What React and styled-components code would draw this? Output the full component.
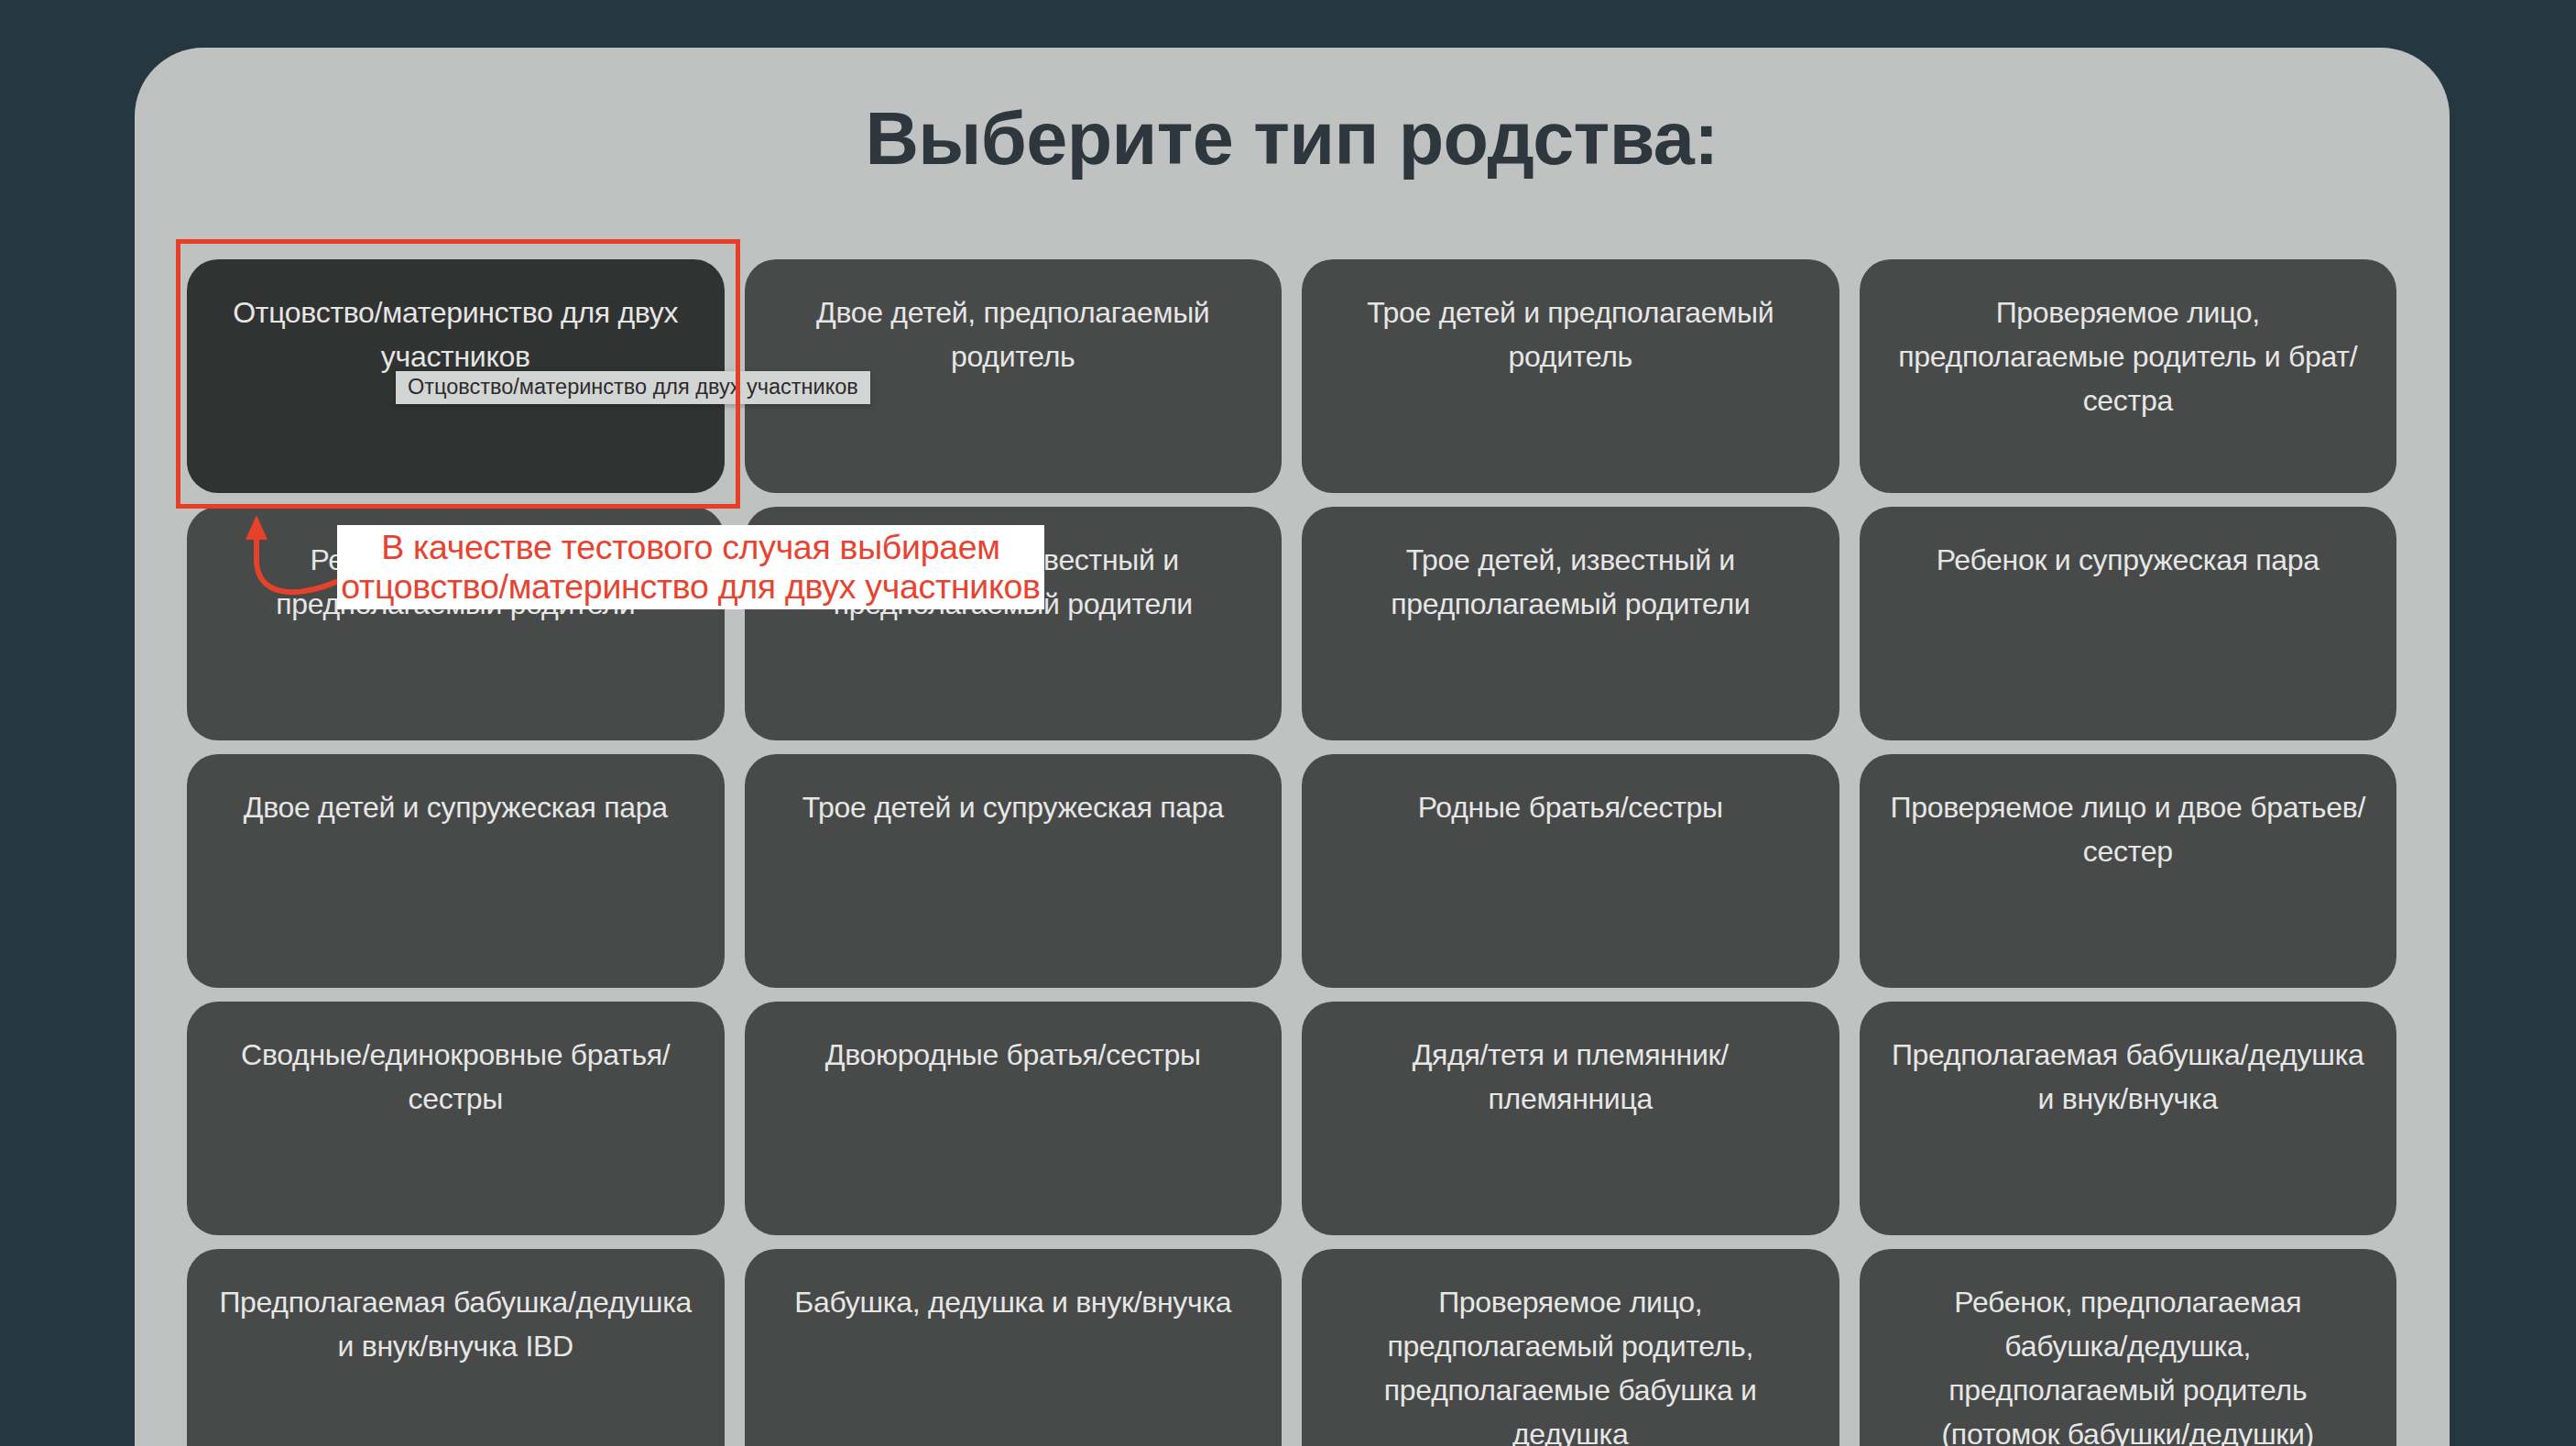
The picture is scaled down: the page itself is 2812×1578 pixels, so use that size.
import React from 'react';
import styled, { createGlobalStyle } from 'styled-components';

const GlobalStyle = createGlobalStyle`
  html, body {
    margin: 0;
    padding: 0;
    height: 100%;
    overflow: hidden;
    background: #253740;
  }
  body {
    font-family: "Liberation Sans", Arial, sans-serif;
  }
`;

const relations = [
  { lines: ['Отцовство/материнство для двух', 'участников'], active: true },
  { lines: ['Двое детей, предполагаемый', 'родитель'] },
  { lines: ['Трое детей и предполагаемый', 'родитель'] },
  { lines: ['Проверяемое лицо,', 'предполагаемые родитель и брат/', 'сестра'] },
  { lines: ['Ребенок, известный и', 'предполагаемый родители'] },
  { lines: ['Двое детей, известный и', 'предполагаемый родители'] },
  { lines: ['Трое детей, известный и', 'предполагаемый родители'] },
  { lines: ['Ребенок и супружеская пара'] },
  { lines: ['Двое детей и супружеская пара'] },
  { lines: ['Трое детей и супружеская пара'] },
  { lines: ['Родные братья/сестры'] },
  { lines: ['Проверяемое лицо и двое братьев/', 'сестер'] },
  { lines: ['Сводные/единокровные братья/', 'сестры'] },
  { lines: ['Двоюродные братья/сестры'] },
  { lines: ['Дядя/тетя и племянник/', 'племянница'] },
  { lines: ['Предполагаемая бабушка/дедушка', 'и внук/внучка'] },
  { lines: ['Предполагаемая бабушка/дедушка', 'и внук/внучка IBD'] },
  { lines: ['Бабушка, дедушка и внук/внучка'] },
  { lines: ['Проверяемое лицо,', 'предполагаемый родитель,', 'предполагаемые бабушка и', 'дедушка'] },
  { lines: ['Ребенок, предполагаемая', 'бабушка/дедушка,', 'предполагаемый родитель', '(потомок бабушки/дедушки)'] },
];

function App() {
  return (
    <>
      <GlobalStyle />
      <Panel>
        <Title>Выберите тип родства:</Title>
        <Grid>
          {relations.map((r, i) => (
            <Card key={i} $active={r.active}>
              {r.lines.map((line, j) => (
                <Line key={j}>{line}</Line>
              ))}
              {r.active && <Tooltip>Отцовство/материнство для двух участников</Tooltip>}
            </Card>
          ))}
        </Grid>

        {/* annotation layer over the grid */}
        <Highlight />
        <Arrow viewBox="0 0 120 110" width="120" height="110">
          <path
            d="M112 85 C 66 104, 26 100, 25 62 L 25 36"
            fill="none"
            stroke="#e8412a"
            strokeWidth="6"
            strokeLinecap="round"
          />
          <polygon points="25,12 13,39 37,39" fill="#e8412a" />
        </Arrow>
        <Note>
          В качестве тестового случая выбираем
          <br />
          отцовство/материнство для двух участников
        </Note>
      </Panel>
    </>
  );
}

export default App;

const Panel = styled.div`
  position: relative;
  margin: 52px 138px 0 147px;
  padding: 53px 58px 60px 57px;
  background: #c0c2c1;
  border-radius: 75px 75px 0 0;
  min-height: 1600px;
  box-sizing: border-box;
`;

const Title = styled.h1`
  margin: 0 0 85px;
  text-align: center;
  font-family: "Liberation Sans", Arial, sans-serif;
  font-weight: 700;
  font-size: 81px;
  line-height: 93px;
  letter-spacing: -0.6px;
  color: #2e373d;
`;

const Grid = styled.div`
  display: grid;
  grid-template-columns: repeat(4, 1fr);
  column-gap: 22px;
  row-gap: 15px;
`;

const Card = styled.div`
  position: relative;
  height: 255px;
  box-sizing: border-box;
  padding: 34px 20px 0;
  border-radius: 34px;
  background: ${(p) => (p.$active ? '#313332' : '#484a49')};
  color: #e6e6e6;
  text-align: center;
  font-family: "Liberation Sans", Arial, sans-serif;
  font-size: 32px;
  line-height: 48px;
  letter-spacing: -0.3px;
`;

const Line = styled.div`
  white-space: nowrap;
`;

const Tooltip = styled.div`
  position: absolute;
  left: 228px;
  top: 122px;
  z-index: 2;
  height: 36px;
  padding: 0 13px;
  display: flex;
  align-items: center;
  background: #d3d5d4;
  color: #2b2b2b;
  font-family: "Liberation Sans", Arial, sans-serif;
  font-size: 23.5px;
  line-height: 1;
  letter-spacing: 0;
  white-space: nowrap;
  box-shadow: 0 2px 6px rgba(0, 0, 0, 0.25);
`;

const Highlight = styled.div`
  position: absolute;
  left: 45px;
  top: 209px;
  width: 616px;
  height: 294px;
  box-sizing: border-box;
  border: 5px solid #e63e27;
  z-index: 3;
  pointer-events: none;
`;

const Arrow = styled.svg`
  position: absolute;
  left: 108px;
  top: 498px;
  z-index: 3;
  overflow: visible;
`;

const Note = styled.div`
  position: absolute;
  left: 221px;
  top: 521px;
  width: 772px;
  height: 92px;
  box-sizing: border-box;
  padding-top: 3px;
  z-index: 4;
  background: #ffffff;
  color: #e8432f;
  text-align: center;
  font-family: "Liberation Sans", Arial, sans-serif;
  font-size: 37.5px;
  line-height: 43px;
  letter-spacing: -0.3px;
  white-space: nowrap;
`;
